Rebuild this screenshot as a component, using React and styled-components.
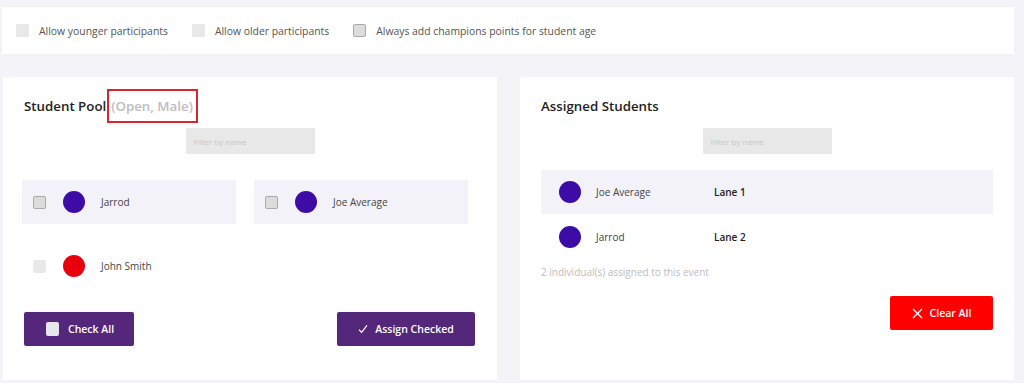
import React from "react";
import styled, { createGlobalStyle } from "styled-components";

const GlobalStyle = createGlobalStyle`
  html, body {
    margin: 0;
    padding: 0;
    background: #f4f4f8;
    font-family: "Open Sans", "Noto Sans", sans-serif;
  }
`;

const Page = styled.div`
  width: 1024px;
  height: 383px;
  box-sizing: border-box;
  padding: 7px 10px 0 3px;
  overflow: hidden;
`;

const OptionsBar = styled.div`
  height: 47px;
  background: #fff;
  display: flex;
  align-items: center;
  gap: 24px;
  padding-left: 14px;
  margin-left: -1px;
  box-shadow: 0 0 2px rgba(0, 0, 0, 0.03);
`;

const Option = styled.label`
  display: flex;
  align-items: center;
  gap: 10px;
  font-size: 10.4px;
  color: #555;
`;

const Box = styled.span`
  width: 13px;
  height: 13px;
  box-sizing: border-box;
  border-radius: 2px;
  background: ${(p) => (p.$enabled ? "#dcdcdc" : "#e8e8e8")};
  border: ${(p) => (p.$enabled ? "1px solid #aaa" : "none")};
  flex: none;
`;

const Columns = styled.div`
  display: grid;
  grid-template-columns: 494px 494px;
  gap: 23px;
  margin-top: 23px;
`;

const Card = styled.section`
  background: #fff;
  height: 303px;
  box-sizing: border-box;
  padding-top: 12px;
  display: flex;
  flex-direction: column;
`;

const TitleRow = styled.div`
  height: 34px;
  display: flex;
  align-items: center;
  padding-left: 21px;
  font-size: 13.3px;
  font-weight: 600;
  color: #222;
`;

const Marked = styled.span`
  box-sizing: border-box;
  height: 34px;
  display: flex;
  align-items: center;
  margin-left: 1px;
  padding: 0 3px 0 2px;
  border: 2px solid #d8262f;
  color: #bdbdbd;
  font-weight: 600;
`;

const Filter = styled.input`
  align-self: center;
  width: 129px;
  height: 26px;
  box-sizing: border-box;
  margin-top: 5px;
  border: none;
  outline: none;
  background: #e8e8e8;
  padding: 0 8px;
  font-family: inherit;
  font-size: 8px;
  color: #444;
  &::placeholder {
    color: #c6c6c6;
  }
`;

const PoolGrid = styled.div`
  display: grid;
  grid-template-columns: 214px 214px;
  column-gap: 18px;
  row-gap: 20px;
  margin: 26px 0 0 19px;
`;

const PoolItem = styled.div`
  height: 44px;
  display: flex;
  align-items: center;
  padding-left: 11px;
  background: ${(p) => (p.$shaded ? "#f3f2f8" : "transparent")};
`;

const Avatar = styled.span`
  width: 22px;
  height: 22px;
  border-radius: 50%;
  background: ${(p) => p.$color};
  flex: none;
`;

const Name = styled.span`
  font-size: 10px;
  color: #444;
  width: ${(p) => (p.$width ? `${p.$width}px` : "auto")};
  flex: none;
`;

const PoolItemInner = styled.div`
  display: flex;
  align-items: center;
  gap: 16px;
  & > ${Avatar} {
    margin-left: 1px;
  }
  & > ${Name} {
    margin-left: 0;
  }
`;

const Actions = styled.div`
  display: flex;
  justify-content: space-between;
  align-items: flex-start;
  padding: 0 22px 0 21px;
  margin-top: 24px;
`;

const Button = styled.button`
  height: 34px;
  width: ${(p) => p.$width}px;
  border: none;
  border-radius: 2px;
  background: ${(p) => (p.$danger ? "#ff0000" : "#54277a")};
  color: #fff;
  font-family: inherit;
  font-size: 10.5px;
  font-weight: 600;
  display: flex;
  align-items: center;
  justify-content: ${(p) => (p.$start ? "flex-start" : "center")};
  padding: ${(p) => (p.$start ? "0 0 0 22px" : "0")};
  gap: ${(p) => p.$gap || 7}px;
  cursor: pointer;
`;

const WhiteBox = styled.span`
  width: 13px;
  height: 14px;
  border-radius: 2px;
  background: #e6e6ee;
`;

const AssignedList = styled.div`
  display: flex;
  flex-direction: column;
  gap: 1px;
  margin: 16px 21px 0 21px;
`;

const AssignedRow = styled.div`
  height: 44px;
  display: flex;
  align-items: center;
  padding-left: 18px;
  gap: 14px;
  background: ${(p) => (p.$shaded ? "#f3f2f8" : "transparent")};
  & > ${Name} {
    margin-left: 1px;
  }
`;

const Lane = styled.span`
  font-size: 10px;
  font-weight: 600;
  color: #222;
`;

const Count = styled.div`
  font-size: 10px;
  color: #bcbcbc;
  padding-left: 21px;
  margin-top: 6px;
`;

const ClearRow = styled.div`
  display: flex;
  justify-content: flex-end;
  padding-right: 21px;
  margin-top: 17px;
`;

const CheckIcon = () => (
  <svg width="10" height="10" viewBox="0 0 10 10" fill="none">
    <path d="M1 5.6 L3.6 8.4 L9 1.4" stroke="#fff" strokeWidth="1.2" />
  </svg>
);

const XIcon = () => (
  <svg width="11" height="11" viewBox="0 0 11 11" fill="none">
    <path d="M1 1 L10 10 M10 1 L1 10" stroke="#fff" strokeWidth="1.3" />
  </svg>
);

const pool = [
  { name: "Jarrod", color: "#3d0ba6", shaded: true, enabled: true },
  { name: "Joe Average", color: "#3d0ba6", shaded: true, enabled: true },
  { name: "John Smith", color: "#e8000d", shaded: false, enabled: false },
];

const assigned = [
  { name: "Joe Average", lane: "Lane 1", shaded: true },
  { name: "Jarrod", lane: "Lane 2", shaded: false },
];

export default function App() {
  return (
    <Page>
      <GlobalStyle />
      <OptionsBar>
        <Option><Box />Allow younger participants</Option>
        <Option><Box />Allow older participants</Option>
        <Option><Box $enabled />Always add champions points for student age</Option>
      </OptionsBar>
      <Columns>
        <Card>
          <TitleRow>
            Student Pool<Marked>(Open, Male)</Marked>
          </TitleRow>
          <Filter placeholder="Filter by name" />
          <PoolGrid>
            {pool.map((s) => (
              <PoolItem key={s.name} $shaded={s.shaded}>
                <PoolItemInner>
                  <Box $enabled={s.enabled} />
                  <Avatar $color={s.color} />
                  <Name>{s.name}</Name>
                </PoolItemInner>
              </PoolItem>
            ))}
          </PoolGrid>
          <Actions>
            <Button $width={110} $start $gap={9}>
              <WhiteBox />
              Check All
            </Button>
            <Button $width={138}>
              <CheckIcon />
              Assign Checked
            </Button>
          </Actions>
        </Card>
        <Card>
          <TitleRow>Assigned Students</TitleRow>
          <Filter placeholder="Filter by name" />
          <AssignedList>
            {assigned.map((s) => (
              <AssignedRow key={s.name} $shaded={s.shaded}>
                <Avatar $color="#3d0ba6" />
                <Name $width={104}>{s.name}</Name>
                <Lane>{s.lane}</Lane>
              </AssignedRow>
            ))}
          </AssignedList>
          <Count>2 individual(s) assigned to this event</Count>
          <ClearRow>
            <Button $width={103} $danger>
              <XIcon />
              Clear All
            </Button>
          </ClearRow>
        </Card>
      </Columns>
    </Page>
  );
}
